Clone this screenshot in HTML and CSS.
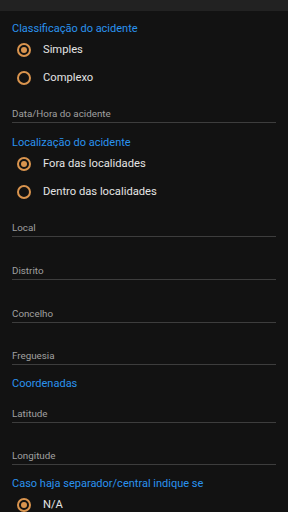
FILE: index.html
```html
<!DOCTYPE html>
<html lang="pt">
<head>
<meta charset="utf-8">
<link rel="stylesheet" href="styles.css">
</head>
<body>
<div class="topbar"></div>
<div class="content">
  <div class="title t1">Classificação do acidente</div>
  <div class="radio-row"><span class="radio checked"></span><span class="rlabel">Simples</span></div>
  <div class="radio-row"><span class="radio"></span><span class="rlabel">Complexo</span></div>
  <div class="field f-first">Data/Hora do acidente</div>

  <div class="title t2">Localização do acidente</div>
  <div class="radio-row"><span class="radio checked"></span><span class="rlabel">Fora das localidades</span></div>
  <div class="radio-row"><span class="radio"></span><span class="rlabel">Dentro das localidades</span></div>
  <div class="field f-first">Local</div>
  <div class="field f-next">Distrito</div>
  <div class="field f-next">Concelho</div>
  <div class="field f-next2">Freguesia</div>

  <div class="title t3">Coordenadas</div>
  <div class="field f-lat">Latitude</div>
  <div class="field f-next2">Longitude</div>

  <div class="title t3">Caso haja separador/central indique se</div>
  <div class="radio-row"><span class="radio checked"></span><span class="rlabel">N/A</span></div>
</div>
</body>
</html>
```
FILE: styles.css
```css
html, body {
  margin: 0;
  padding: 0;
  background: #121212;
  width: 288px;
  height: 512px;
  overflow: hidden;
  font-family: Roboto, "Noto Sans", sans-serif;
}
.topbar {
  height: 11px;
  background: #222222;
}
.content {
  padding: 0 12px;
  display: flex;
  flex-direction: column;
}
.title {
  color: #2a93ef;
  font-size: 11px;
  line-height: 14px;
  height: 14px;
  white-space: nowrap;
}
.t1 { margin-top: 11px; }
.t2 { margin-top: 13px; }
.t3 { margin-top: 12px; }
.radio-row {
  height: 28px;
  display: flex;
  align-items: center;
  padding-left: 5px;
  gap: 12px;
}
.radio {
  width: 10px;
  height: 10px;
  border: 2px solid #d9944e;
  border-radius: 50%;
  display: flex;
  align-items: center;
  justify-content: center;
  box-sizing: content-box;
}
.radio.checked::after {
  content: "";
  width: 6px;
  height: 6px;
  border-radius: 50%;
  background: #d9944e;
}
.rlabel {
  color: #e4e4e4;
  font-size: 11.2px;
  line-height: 14px;
}
.field {
  color: #a0a0a0;
  font-size: 9.8px;
  line-height: 14px;
  padding-bottom: 1px;
  border-bottom: 1px solid #3d3d3d;
}
.f-first { margin-top: 15px; }
.f-next { margin-top: 27px; }
.f-next2 { margin-top: 26px; }
.f-lat { margin-top: 16px; }
```
